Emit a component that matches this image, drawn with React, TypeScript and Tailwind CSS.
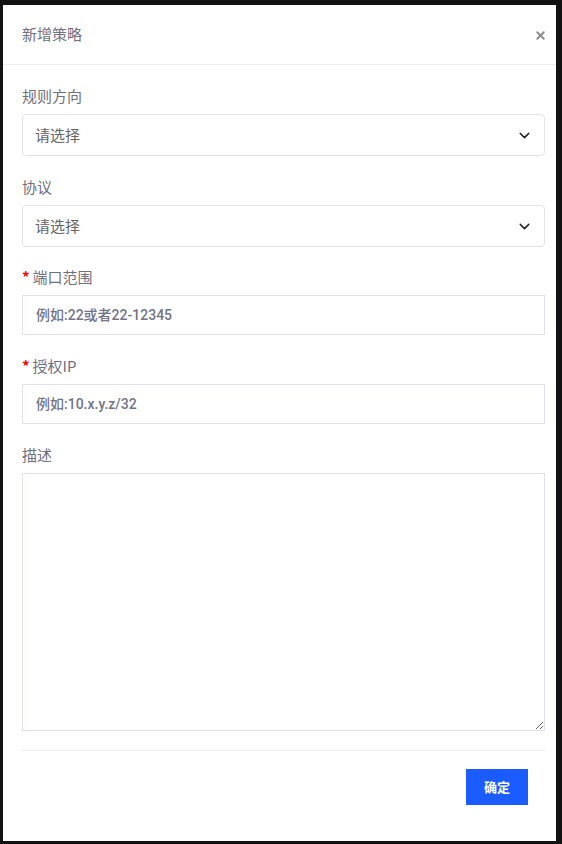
import { ChevronDown, X } from "lucide-react";

const font = { fontFamily: '"Noto Sans CJK SC", "Noto Sans", sans-serif' };

function Label({ text, required }: { text: string; required?: boolean }) {
  return (
    <div className="flex items-center h-[22px] mb-[7px] text-[15px] text-[#6f7080]">
      {required && <span className="text-[#f00] mr-[3px] font-bold">*</span>}
      {text}
    </div>
  );
}

function Select({ label, last }: { label: string; last?: boolean }) {
  return (
    <div className={last ? "mb-[19px]" : "mb-5"}>
      <Label text={label} />
      <div className="h-[42px] flex items-center justify-between border border-[#e4e4e4] rounded-[4px] pl-[12px] pr-[11px]">
        <span className="text-[15px] text-[#666]">请选择</span>
        <ChevronDown size={17} strokeWidth={2} className="text-[#222]" />
      </div>
    </div>
  );
}

function Input({ label, placeholder }: { label: string; placeholder: string }) {
  return (
    <div className="mb-5">
      <Label text={label} required />
      <div className="h-[40px] flex items-center border border-[#e1e1ee] px-[13px]">
        <span
          className="text-[14px] font-medium text-[#727486]"
          style={{ fontFamily: 'Roboto, "Noto Sans CJK SC", sans-serif' }}
        >
          {placeholder}
        </span>
      </div>
    </div>
  );
}

export default function App() {
  return (
    <div className="w-full h-screen bg-[#121212] pt-[5px] pl-[3px] pr-[6px] pb-[3px]" style={font}>
      <div className="h-full bg-white flex flex-col">
        {/* Header */}
        <div className="h-[60px] flex items-center justify-between pl-[19px] pr-[9px] border-b border-[#eeeeee]">
          <span className="text-[15px] text-[#6f7080]">新增策略</span>
          <X size={13} strokeWidth={3.4} className="text-[#8a8a8a] mt-[2px]" />
        </div>

        {/* Body */}
        <div className="pt-5 pl-[19px] pr-[11px]">
          <Select label="规则方向" />
          <Select label="协议" last />
          <Input label="端口范围" placeholder="例如:22或者22-12345" />
          <Input label="授权IP" placeholder="例如:10.x.y.z/32" />
          <div>
            <Label text="描述" />
            <textarea className="block w-full h-[258px] border border-[#e1e1ee] outline-none" />
          </div>
          <div className="mt-[19px] border-t border-[#eeeeee] pt-[18px] flex justify-end pr-[17px]">
            <button className="w-[62px] h-[36px] bg-[#1a5cff] text-white text-[13px] font-bold">
              确定
            </button>
          </div>
        </div>
      </div>
    </div>
  );
}
